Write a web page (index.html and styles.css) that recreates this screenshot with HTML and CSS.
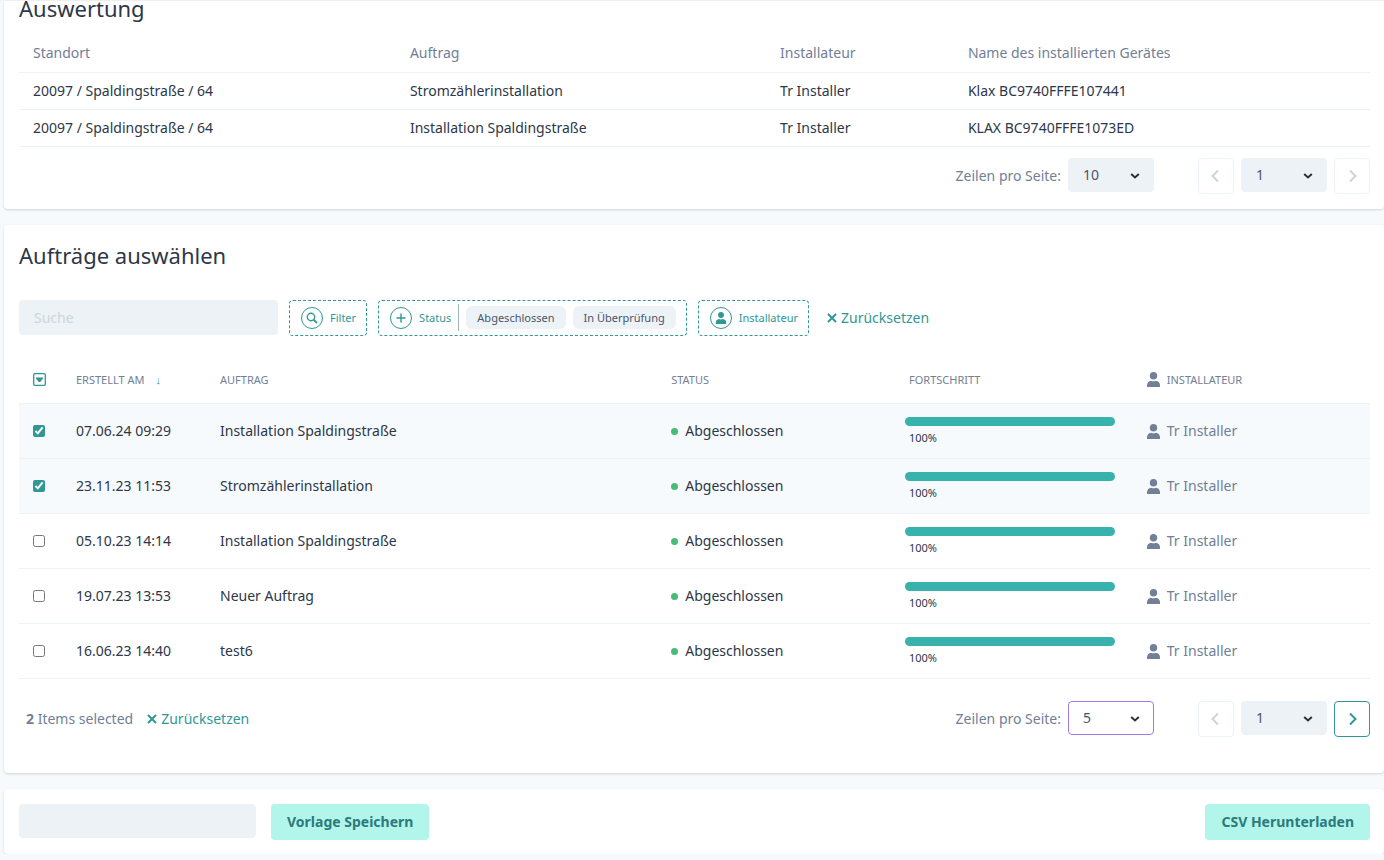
FILE: index.html
```html
<!DOCTYPE html>
<html lang="de">
<head>
<meta charset="utf-8">
<meta name="viewport" content="width=device-width, initial-scale=1">
<title>Auswertung</title>
<link rel="stylesheet" href="styles.css">
</head>
<body>
<svg class="sprite" aria-hidden="true">
  <symbol id="i-user" viewBox="0 0 13 15"><ellipse cx="6.5" cy="3.800" rx="3.700" ry="3.800"/><path d="M0 15v-1.800C0 10.500 2 9.200 4 8.800c1.600.7 3.400.7 5 0 2 .4 4 1.700 4 4.400V15z"/></symbol>
  <symbol id="i-left" viewBox="0 0 12 16"><path d="M8 2.500 2.500 8 8 13.500" fill="none" stroke="currentColor" stroke-width="2"/></symbol>
  <symbol id="i-right" viewBox="0 0 12 16"><path d="M4 2.500 9.500 8 4 13.500" fill="none" stroke="currentColor" stroke-width="2"/></symbol>
  <symbol id="i-close" viewBox="0 0 10 10"><path d="M1 1l8 8M9 1l-8 8" fill="none" stroke="currentColor" stroke-width="2"/></symbol>
  <symbol id="i-down" viewBox="0 0 10 6"><path d="M1.200 1 5 4.500 8.800 1" fill="none" stroke="currentColor" stroke-width="2"/></symbol>
</svg>
<main class="page">
  <section class="card card-report">
    <h2 class="title">Auswertung</h2>
    <table class="report">
      <thead><tr><th class="r-site">Standort</th><th class="r-job">Auftrag</th><th class="r-inst">Installateur</th><th>Name des installierten Gerätes</th></tr></thead>
      <tbody>
        <tr><td>20097 / Spaldingstraße / 64</td><td>Stromzählerinstallation</td><td>Tr Installer</td><td>Klax BC9740FFFE107441</td></tr>
        <tr><td>20097 / Spaldingstraße / 64</td><td>Installation Spaldingstraße</td><td>Tr Installer</td><td>KLAX BC9740FFFE1073ED</td></tr>
      </tbody>
    </table>
    <div class="footer">
      <div class="pager">
        <label for="rows1">Zeilen pro Seite:</label>
        <div class="picker"><select id="rows1" class="select"><option>10</option></select><svg><use href="#i-down"/></svg></div>
        <div class="pages">
          <button class="step" type="button" disabled aria-label="Vorherige Seite"><svg><use href="#i-left"/></svg></button>
          <div class="picker"><select class="select" aria-label="Seite"><option>1</option></select><svg><use href="#i-down"/></svg></div>
          <button class="step" type="button" disabled aria-label="Nächste Seite"><svg><use href="#i-right"/></svg></button>
        </div>
      </div>
    </div>
  </section>

  <section class="card card-jobs">
    <h2 class="title">Aufträge auswählen</h2>
    <div class="toolbar">
      <input class="field search" type="text" placeholder="Suche" aria-label="Suche">
      <button class="filter" type="button">
        <span class="ring"><svg viewBox="0 0 12 12"><circle cx="5" cy="5" r="3.700" fill="none" stroke="currentColor" stroke-width="1.400"/><path d="M7.700 7.700l3.300 3.300" stroke="currentColor" stroke-width="1.800"/></svg></span>Filter
      </button>
      <button class="filter" type="button">
        <span class="ring"><svg viewBox="0 0 12 12"><path d="M6 1.500v9M1.500 6h9" stroke="currentColor" stroke-width="1.400"/></svg></span>Status
        <span class="chips"><span class="chip">Abgeschlossen</span><span class="chip">In Überprüfung</span></span>
      </button>
      <button class="filter" type="button">
        <span class="ring"><svg><use href="#i-user"/></svg></span>Installateur
      </button>
      <a class="reset" href="#"><svg><use href="#i-close"/></svg>Zurücksetzen</a>
    </div>

    <table class="jobs">
      <thead><tr>
        <th class="c-check"><button class="pick" type="button" aria-label="Auswahl"><svg viewBox="0 0 13 13"><rect x="0.700" y="0.700" width="11.600" height="11.600" rx="1" fill="none" stroke="currentColor" stroke-width="1.300"/><path d="M3 4.500h7v1L7.300 9H5.700L3 5.500z" fill="currentColor"/></svg></button></th>
        <th class="c-date">Erstellt am<span class="sort">↓</span></th>
        <th class="c-job">Auftrag</th><th class="c-status">Status</th><th class="c-prog">Fortschritt</th>
        <th><span class="person"><svg><use href="#i-user"/></svg>Installateur</span></th>
      </tr></thead>
      <tbody>
        <tr class="selected"><td><input type="checkbox" checked aria-label="07.06.24 09:29"></td><td>07.06.24 09:29</td><td>Installation Spaldingstraße</td><td><span class="status">Abgeschlossen</span></td><td><div class="prog"><progress id="p1" value="100" max="100"></progress><label for="p1">100%</label></div></td><td><span class="person"><svg><use href="#i-user"/></svg>Tr Installer</span></td></tr>
        <tr class="selected"><td><input type="checkbox" checked aria-label="23.11.23 11:53"></td><td>23.11.23 11:53</td><td>Stromzählerinstallation</td><td><span class="status">Abgeschlossen</span></td><td><div class="prog"><progress id="p2" value="100" max="100"></progress><label for="p2">100%</label></div></td><td><span class="person"><svg><use href="#i-user"/></svg>Tr Installer</span></td></tr>
        <tr><td><input type="checkbox" aria-label="05.10.23 14:14"></td><td>05.10.23 14:14</td><td>Installation Spaldingstraße</td><td><span class="status">Abgeschlossen</span></td><td><div class="prog"><progress id="p3" value="100" max="100"></progress><label for="p3">100%</label></div></td><td><span class="person"><svg><use href="#i-user"/></svg>Tr Installer</span></td></tr>
        <tr><td><input type="checkbox" aria-label="19.07.23 13:53"></td><td>19.07.23 13:53</td><td>Neuer Auftrag</td><td><span class="status">Abgeschlossen</span></td><td><div class="prog"><progress id="p4" value="100" max="100"></progress><label for="p4">100%</label></div></td><td><span class="person"><svg><use href="#i-user"/></svg>Tr Installer</span></td></tr>
        <tr><td><input type="checkbox" aria-label="16.06.23 14:40"></td><td>16.06.23 14:40</td><td>test6</td><td><span class="status">Abgeschlossen</span></td><td><div class="prog"><progress id="p5" value="100" max="100"></progress><label for="p5">100%</label></div></td><td><span class="person"><svg><use href="#i-user"/></svg>Tr Installer</span></td></tr>
      </tbody>
    </table>

    <div class="footer">
      <div class="selection"><span><b>2</b> Items selected</span><a class="reset" href="#"><svg><use href="#i-close"/></svg>Zurücksetzen</a></div>
      <div class="pager">
        <label for="rows2">Zeilen pro Seite:</label>
        <div class="picker"><select id="rows2" class="select focused"><option>5</option></select><svg><use href="#i-down"/></svg></div>
        <div class="pages">
          <button class="step" type="button" disabled aria-label="Vorherige Seite"><svg><use href="#i-left"/></svg></button>
          <div class="picker"><select class="select" aria-label="Seite"><option>1</option></select><svg><use href="#i-down"/></svg></div>
          <button class="step" type="button" aria-label="Nächste Seite"><svg><use href="#i-right"/></svg></button>
        </div>
      </div>
    </div>
  </section>

  <section class="card card-save">
    <input class="field template" type="text" aria-label="Name der Vorlage">
    <button class="primary" type="button">Vorlage Speichern</button>
    <button class="primary download" type="button">CSV Herunterladen</button>
  </section>
</main>
</body>
</html>
```
FILE: styles.css
```css
* { box-sizing: border-box; }

body {
  margin: 0;
  background: #f7fafc;
  color: #2d3748;
  font: 14px/20px "Noto Sans", sans-serif;
}

button, input, select { font: inherit; margin: 0; }
button { cursor: pointer; }
svg { display: block; flex: none; fill: currentColor; }
.sprite { position: absolute; width: 0; height: 0; }

.page {
  display: flex;
  flex-direction: column;
  gap: 16px;
  padding-left: 4px;
  border-top: 1px solid #f0f2f4;
}

.card {
  padding: 15px 14px 14px 15px;
  background: #fff;
  border-radius: 4px;
  box-shadow: 0 1px 3px rgba(0, 0, 0, 0.1), 0 1px 2px rgba(0, 0, 0, 0.06);
}
.card-report { padding-top: 0; padding-bottom: 15px; border-top-left-radius: 0; border-top-right-radius: 0; }
.card-jobs { padding-bottom: 36px; }

.title { margin: 0; font-size: 22px; line-height: 30px; font-weight: 400; }
.card-report .title { line-height: 14px; padding-bottom: 20px; }

table { width: 100%; border-collapse: collapse; table-layout: fixed; }
th, td { padding: 0 14px; text-align: left; font-weight: 400; border-bottom: 1px solid #edf2f7; white-space: nowrap; }

.report th, .report td { height: 37px; }
.report th { color: #718096; }
.r-site { width: 27.9%; }
.r-job { width: 27.4%; }
.r-inst { width: 13.9%; }

.footer { display: flex; align-items: center; padding-top: 11px; }
.pager { display: flex; align-items: center; gap: 7px; margin-left: auto; color: #718096; }
.pages { display: flex; gap: 7px; margin-left: 37px; }

.picker { position: relative; align-self: flex-start; }
.picker svg {
  position: absolute;
  top: 15px;
  right: 14px;
  width: 10px;
  height: 6px;
  color: #2d3035;
  pointer-events: none;
}
.select {
  appearance: none;
  display: block;
  width: 86px;
  height: 34px;
  padding: 0 28px 0 14px;
  border: 1px solid #edf2f7;
  border-radius: 4px;
  background-color: #edf2f7;
  color: #4a5568;
  outline: 0;
}
.select.focused { border-color: #9f7aea; background-color: #fff; }

.step {
  display: flex;
  align-items: center;
  justify-content: center;
  width: 36px;
  height: 36px;
  padding: 0;
  border: 1px solid #319795;
  border-radius: 4px;
  background: #fff;
  color: #319795;
}
.step:disabled { border-color: #edf2f7; color: #cbd5e0; }
.step svg { width: 12px; height: 16px; }

.toolbar { display: flex; gap: 11px; padding-top: 30px; }
.field { height: 34px; padding: 0 14px; border: 1px solid #edf2f7; border-radius: 4px; background: #edf2f7; color: #2d3748; }
.field::placeholder { color: #cbd5e0; opacity: 1; }
.search { width: 259px; height: 35px; }

.filter {
  display: flex;
  align-items: center;
  height: 36px;
  padding: 0 10px 0 11px;
  border: 1px dashed #319795;
  border-radius: 4px;
  background: #fff;
  color: #319795;
  font-size: 11px;
}
.ring {
  display: flex;
  align-items: center;
  justify-content: center;
  width: 22px;
  height: 22px;
  margin-right: 7px;
  border: 1px solid #319795;
  border-radius: 50%;
}
.ring svg { width: 12px; height: 12px; }
.chips { display: flex; align-items: center; gap: 7px; height: 27px; margin-left: 7px; padding-left: 7px; border-left: 1px solid #a0aec0; }
.chip { padding: 0 11px; border-radius: 6px; background: #edf2f7; color: #4a5568; line-height: 23px; }

.reset { display: flex; align-items: center; gap: 4px; color: #319795; text-decoration: none; }
.reset svg { width: 10px; height: 10px; }
.toolbar .reset { margin-left: 7px; }

.jobs { margin-top: 21px; }
.jobs th { height: 47px; color: #718096; font-size: 11px; text-transform: uppercase; }
.jobs td { height: 55px; }
.c-check { width: 43px; }
.c-date { width: 144px; }
.c-job { width: 33.4%; }
.c-status, .c-prog { width: 17.6%; }
.jobs th:first-child, .jobs td:first-child { padding-right: 0; }
.selected { background: #f7fafc; }
.sort { margin-left: 11px; color: #319795; }
.pick { display: block; padding: 0; border: 0; background: none; color: #319795; }
.pick svg { width: 13px; height: 13px; }
.jobs input { display: block; width: 12px; height: 12px; accent-color: #319795; }

.status { display: flex; align-items: center; gap: 7px; }
.status::before { content: ""; width: 7px; height: 7px; border-radius: 50%; background: #48bb78; }

.prog { display: flex; flex-direction: column; gap: 4px; }
.prog label { font-size: 11px; line-height: 16px; }
progress {
  appearance: none;
  width: 100%;
  height: 9px;
  margin-left: -4px;
  border: 0;
  border-radius: 5px;
  background: #edf2f7;
  overflow: hidden;
}
progress::-webkit-progress-bar { background: #edf2f7; }
progress::-webkit-progress-value { background: #38b2ac; }

.person { display: flex; align-items: center; gap: 7px; color: #718096; }
.person svg { width: 13px; height: 15px; }

.jobs + .footer { padding-top: 22px; }
.selection { display: flex; gap: 14px; padding-left: 7px; color: #718096; }

.card-save { display: flex; gap: 15px; }
.template { width: 237px; }
.primary { height: 36px; padding: 0 16px; border: 0; border-radius: 4px; background: #b2f5ea; color: #2c7a7b; font-weight: 700; }
.download { margin-left: auto; }
```
